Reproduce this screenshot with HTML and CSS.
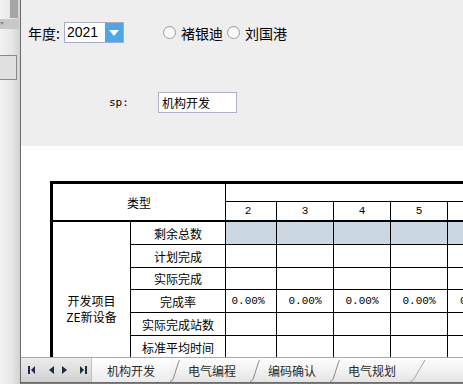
FILE: index.html
```html
<!DOCTYPE html>
<html lang="zh-CN">
<head>
    <meta charset="UTF-8">
    <meta name="viewport" content="width=device-width, initial-scale=1.0">
    <title>机构开发</title>
    <link rel="stylesheet" href="styles.css">
</head>
<body>
    <div class="app">
        <div class="side">
            <div class="side-thumb"></div>
            <div class="side-band"><span class="side-arrow"></span></div>
            <div class="side-box"></div>
        </div>

        <div class="main">
            <div class="form">
                <div class="form-row row-year">
                    <span class="label">年度:</span>
                    <div class="year-select">
                        <span class="year-value">2021</span>
                        <span class="drop-btn">
                            <svg width="10" height="6" viewBox="0 0 10 6"><path d="M0 0 H10 L5 6 Z" fill="#fff"/></svg>
                        </span>
                    </div>
                    <label class="radio"><input type="radio" name="who"> 褚银迪</label>
                    <label class="radio"><input type="radio" name="who"> 刘国港</label>
                </div>
                <div class="form-row row-sp">
                    <span class="label-sp">sp:</span>
                    <input class="sp-input" type="text" value="机构开发">
                </div>
            </div>

            <div class="sheet">
                <div class="grid">
                    <div class="cell head-type">类型</div>
                    <div class="cell head-top"></div>
                    <div class="cell num first">2</div>
                    <div class="cell num">3</div>
                    <div class="cell num">4</div>
                    <div class="cell num">5</div>
                    <div class="cell num"></div>

                    <div class="cell project">
                        <span class="project-line">开发项目</span>
                        <span class="project-line">ZE新设备</span>
                    </div>

                    <div class="cell">剩余总数</div>
                    <div class="cell fill"></div><div class="cell fill"></div><div class="cell fill"></div><div class="cell fill"></div><div class="cell fill"></div>

                    <div class="cell">计划完成</div>
                    <div class="cell"></div><div class="cell"></div><div class="cell"></div><div class="cell"></div><div class="cell"></div>

                    <div class="cell">实际完成</div>
                    <div class="cell"></div><div class="cell"></div><div class="cell"></div><div class="cell"></div><div class="cell"></div>

                    <div class="cell">完成率</div>
                    <div class="cell pct first">0.00%</div><div class="cell pct">0.00%</div><div class="cell pct">0.00%</div><div class="cell pct">0.00%</div><div class="cell pct last">0.00%</div>

                    <div class="cell">实际完成站数</div>
                    <div class="cell"></div><div class="cell"></div><div class="cell"></div><div class="cell"></div><div class="cell"></div>

                    <div class="cell">标准平均时间</div>
                    <div class="cell"></div><div class="cell"></div><div class="cell"></div><div class="cell"></div><div class="cell"></div>

                    <div class="cell"></div>
                    <div class="cell"></div><div class="cell"></div><div class="cell"></div><div class="cell"></div><div class="cell"></div>

                    <div class="cell"></div>
                    <div class="cell"></div><div class="cell"></div><div class="cell"></div><div class="cell"></div><div class="cell"></div>
                </div>
            </div>

            <div class="tabs">
                <div class="tab-nav">
                    <svg width="7" height="8" viewBox="0 0 7 8"><rect x="0" y="0" width="2" height="8" fill="#1f2a48"/><path d="M7 0 V8 L3 4 Z" fill="#1f2a48"/></svg>
                    <svg class="nav-prev" width="5" height="8" viewBox="0 0 5 8"><path d="M5 0 V8 L0 4 Z" fill="#1f2a48"/></svg>
                    <svg width="5" height="8" viewBox="0 0 5 8"><path d="M0 0 V8 L5 4 Z" fill="#1f2a48"/></svg>
                    <svg class="nav-last" width="7" height="8" viewBox="0 0 7 8"><path d="M0 0 V8 L4 4 Z" fill="#1f2a48"/><rect x="5" y="0" width="2" height="8" fill="#1f2a48"/></svg>
                </div>
                <div class="tab active">机构开发</div>
                <div class="tab">
                    <svg class="slash" width="10" height="24" viewBox="0 0 10 24"><path d="M0 23.5 Q2.5 23.5 3.5 20 L8.5 4 Q9.3 2 10 2" fill="none" stroke="#8c8c8c"/></svg>
                    <span class="tab-text">电气编程</span>
                </div>
                <div class="tab">
                    <svg class="slash" width="10" height="24" viewBox="0 0 10 24"><path d="M0 23.5 Q2.5 23.5 3.5 20 L8.5 4 Q9.3 2 10 2" fill="none" stroke="#8c8c8c"/></svg>
                    <span class="tab-text">编码确认</span>
                </div>
                <div class="tab">
                    <svg class="slash" width="10" height="24" viewBox="0 0 10 24"><path d="M0 23.5 Q2.5 23.5 3.5 20 L8.5 4 Q9.3 2 10 2" fill="none" stroke="#8c8c8c"/></svg>
                    <span class="tab-text">电气规划</span>
                </div>
                <div class="tab end">
                    <svg class="slash" width="16" height="24" viewBox="0 0 16 24"><path d="M0 23.5 Q3 23.5 4.5 20 L15 2" fill="none" stroke="#a8a8a8"/></svg>
                </div>
            </div>
            <div class="status"></div>
        </div>
    </div>
</body>
</html>
```
FILE: styles.css
```css
body {
    margin: 0;
    padding: 0;
    width: 463px;
    height: 384px;
    overflow: hidden;
    font-family: "Noto Sans CJK SC", "Liberation Sans", sans-serif;
    color: #000;
}

.app {
    display: flex;
    height: 384px;
}

/* left strip of the neighbouring window */
.side {
    width: 20px;
    flex: none;
    border-right: 1px solid #6a6a6a;
    background: linear-gradient(to right, #f2f2f2, #e6e6e6 60%, #d2d2d2);
    display: flex;
    flex-direction: column;
}

.side-thumb {
    margin-left: 10px;
    width: 8px;
    height: 18px;
    background-color: #a4a4a4;
}

.side-band {
    margin-top: 1px;
    width: 19px;
    height: 10px;
    background-color: #c8c8c8;
    position: relative;
}

.side-arrow {
    position: absolute;
    left: 0;
    top: 3px;
    border-top: 3px solid #888;
    border-left: 2px solid transparent;
    border-right: 2px solid transparent;
}

.side-box {
    margin-top: 26px;
    width: 16px;
    height: 23px;
    border: 1px solid #8a8a8a;
    border-left: none;
    background-color: #e0e0e0;
}

.main {
    flex: 1;
    display: flex;
    flex-direction: column;
    min-width: 0;
}

/* top form */
.form {
    height: 146px;
    flex: none;
    background-color: #eeeeee;
}

.form-row {
    display: flex;
    align-items: center;
}

.row-year {
    padding-top: 22px;
    padding-left: 7px;
    height: 21px;
}

.label {
    width: 36px;
    font-size: 14px;
}

.year-select {
    display: flex;
    width: 58px;
    height: 19px;
    border: 1px solid #a8aec6;
    background-color: #fff;
}

.year-value {
    flex: 1;
    padding-left: 2px;
    font-family: "Liberation Sans", sans-serif;
    font-size: 14px;
    line-height: 19px;
}

.drop-btn {
    width: 18px;
    background-color: #4ca7ea;
    display: flex;
    align-items: center;
    justify-content: center;
}

.radio {
    display: flex;
    align-items: center;
    gap: 5px;
    font-size: 14px;
    margin-right: 4px;
}

.row-year .radio:first-of-type {
    margin-left: 39px;
}

.radio input {
    appearance: none;
    margin: 0;
    width: 13px;
    height: 13px;
    border: 1px solid #9c9c9c;
    border-radius: 50%;
    background: linear-gradient(#f4f4f4, #ffffff);
    box-sizing: border-box;
}

.row-sp {
    margin-top: 49px;
    height: 21px;
}

.label-sp {
    margin-left: 88px;
    width: 49px;
    font-family: "DejaVu Sans Mono", monospace;
    font-size: 11px;
}

.sp-input {
    width: 79px;
    height: 21px;
    box-sizing: border-box;
    border: 1px solid #adb2c8;
    padding: 0 3px;
    font-family: "Noto Sans CJK SC", sans-serif;
    font-size: 12px;
    color: #000;
    background-color: #fff;
    outline: none;
}

/* sheet */
.sheet {
    height: 211px;
    flex: none;
    background-color: #fff;
    overflow: hidden;
    padding: 35px 0 0 29px;
    box-sizing: border-box;
}

.grid {
    display: grid;
    grid-template-columns: 78px 95px 51px 57px 57px 57px 57px;
    grid-template-rows: 18px 20px 23px 23px 22px 23px 23px 23px 23px 23px;
    width: max-content;
    border-top: 3px solid #000;
    border-left: 3px solid #000;
}

.cell {
    box-sizing: border-box;
    border-right: 1px solid #000;
    border-bottom: 1px solid #000;
    display: flex;
    align-items: center;
    justify-content: center;
    font-size: 12px;
    white-space: nowrap;
}

.head-type {
    grid-column: 1 / 3;
    grid-row: 1 / 3;
    border-bottom-width: 2px;
}

.head-top {
    grid-column: 3 / 8;
    grid-row: 1;
    border-right: none;
}

.num {
    border-bottom-width: 2px;
    font-family: "Liberation Mono", monospace;
    font-size: 11px;
}

.pct {
    font-family: "Liberation Mono", monospace;
    font-size: 11px;
}

.first {
    padding-right: 6px;
}

.last {
    justify-content: flex-start;
    padding-left: 12px;
    overflow: hidden;
}

.project {
    grid-column: 1;
    grid-row: 3 / 11;
    flex-direction: column;
    padding-bottom: 8px;
}

.project-line {
    line-height: 18px;
}

.project-line + .project-line {
    margin-top: -2px;
}

.fill {
    background-color: #cbd8e2;
}

/* sheet tabs */
.tabs {
    height: 24px;
    flex: none;
    display: flex;
    border-top: 1px solid #a9a9a9;
    border-bottom: 1px solid #6c6c6c;
    background: linear-gradient(#fdfdfd, #f2f2f2 50%, #e4e4e4);
}

.tab-nav {
    width: 71px;
    display: flex;
    align-items: center;
    padding-left: 7px;
    box-sizing: border-box;
    gap: 11px;
    background: linear-gradient(#ececec, #dcdcdc 60%, #cfcfcf);
    border-right: 1px solid #c2c2c2;
}

.tab-nav .nav-prev {
    margin-left: 3px;
    margin-right: -3px;
}

.tab-nav .nav-last {
    margin-left: 2px;
}

.tab {
    display: flex;
    align-items: center;
    font-size: 12px;
    color: #2a2a2a;
}

.tab.active {
    width: 78px;
    padding-left: 15px;
    box-sizing: border-box;
    background: linear-gradient(#ffffff, #f6f6f6 50%, #ebebeb);
}

.tab .slash {
    flex: none;
}

.tab-text {
    padding: 0 14px 0 8px;
}

.status {
    flex: 1;
    background-color: #7e7e7e;
}
```
